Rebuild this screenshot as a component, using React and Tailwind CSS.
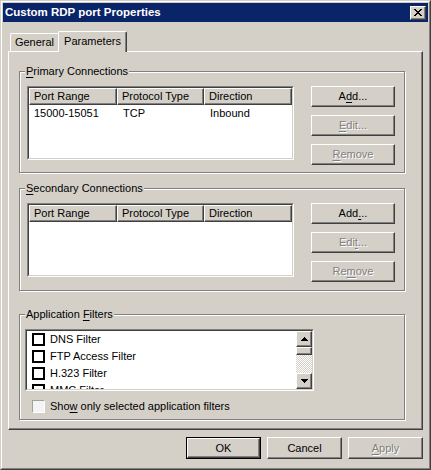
import React from 'react';

const raised =
  'border border-t-white border-l-white border-r-[#404040] border-b-[#404040] bg-[#d4d0c8] shadow-[inset_-1px_-1px_0_#808080]';
const disabledText = 'text-[#808080] [text-shadow:1px_1px_0_#fff]';

function Btn({ children, disabled, wide, isDefault }) {
  const size = wide ? 'h-[20px] w-[73px]' : 'h-[21px] w-[84px]';
  const inner = (
    <button
      type="button"
      className={`flex ${size} items-center justify-center ${raised} ${disabled ? disabledText : 'text-black'}`}
    >
      {children}
    </button>
  );
  if (wide) {
    return (
      <div className={`h-[22px] w-[75px] border ${isDefault ? 'border-black' : 'border-transparent'}`}>
        {isDefault ? inner : (
          <button
            type="button"
            className={`-m-px flex h-[22px] w-[75px] items-center justify-center ${raised} ${disabled ? disabledText : 'text-black'}`}
          >
            {children}
          </button>
        )}
      </div>
    );
  }
  return inner;
}

const Key = ({ children }) => <span className="underline underline-offset-[2px]">{children}</span>;

function GroupBox({ label, className, children }) {
  return (
    <div
      className={`relative w-[386px] border border-[#808080] shadow-[inset_1px_1px_0_#fff,1px_1px_0_#fff] ${className}`}
    >
      <span className="absolute left-[5px] top-[-8px] bg-[#d4d0c8] px-[1px] leading-[14px]">{label}</span>
      {children}
    </div>
  );
}

function HeaderCell({ className, children }) {
  return (
    <div
      className={`flex h-[17px] items-center border border-t-white border-l-white border-r-[#404040] border-b-[#404040] bg-[#d4d0c8] pl-[4px] shadow-[inset_-1px_-1px_0_#808080] ${className}`}
    >
      {children}
    </div>
  );
}

function ListView({ rows }) {
  return (
    <div className="h-[74px] w-[267px] border border-t-[#808080] border-l-[#808080] border-r-white border-b-white">
      <div className="h-full w-full border border-t-[#404040] border-l-[#404040] border-r-[#d4d0c8] border-b-[#d4d0c8] bg-white">
        <div className="flex">
          <HeaderCell className="w-[88px]">Port Range</HeaderCell>
          <HeaderCell className="w-[87px]">Protocol Type</HeaderCell>
          <HeaderCell className="flex-1">Direction</HeaderCell>
        </div>
        {rows.map((r) => (
          <div key={r[0]} className="flex h-[17px] items-center">
            <div className="w-[88px] pl-[5px]">{r[0]}</div>
            <div className="w-[87px] pl-[6px]">{r[1]}</div>
            <div className="flex-1 pl-[6px]">{r[2]}</div>
          </div>
        ))}
      </div>
    </div>
  );
}

function ConnButtons({ secondary }) {
  return (
    <div className="ml-[17px] flex flex-col gap-[8px]">
      <Btn>
        {secondary ? (
          <>
            Add<Key>.</Key>..
          </>
        ) : (
          <>
            A<Key>d</Key>d...
          </>
        )}
      </Btn>
      <Btn disabled>
        {secondary ? (
          <>
            Edi<Key>t</Key>...
          </>
        ) : (
          <>
            <Key>E</Key>dit...
          </>
        )}
      </Btn>
      <Btn disabled>
        {secondary ? (
          <>
            Re<Key>m</Key>ove
          </>
        ) : (
          <>
            <Key>R</Key>emove
          </>
        )}
      </Btn>
    </div>
  );
}

const Arrow = ({ down }) => (
  <svg width="7" height="4" viewBox="0 0 7 4" shapeRendering="crispEdges">
    {down ? (
      <path d="M0 0h7v1H0zM1 1h5v1H1zM2 2h3v1H2zM3 3h1v1H3z" fill="#000" />
    ) : (
      <path d="M3 0h1v1H3zM2 1h3v1H2zM1 2h5v1H1zM0 3h7v1H0z" fill="#000" />
    )}
  </svg>
);

function ScrollBar() {
  return (
    <div className="flex w-[16px] flex-col">
      <div className={`flex h-[16px] w-[16px] items-center justify-center ${raised}`}>
        <Arrow />
      </div>
      <div className={`h-[8px] w-[16px] ${raised}`} />
      <div className="flex-1 bg-[image:repeating-conic-gradient(#ffffff_0_25%,#d4d0c8_0_50%)] bg-[length:2px_2px]" />
      <div className={`flex h-[16px] w-[16px] items-center justify-center ${raised}`}>
        <Arrow down />
      </div>
    </div>
  );
}

const filters = ['DNS Filter', 'FTP Access Filter', 'H.323 Filter', 'MMC Filter'];

export default function App() {
  return (
    <div className="h-[470px] w-[431px] bg-[#d4d0c8] font-['Liberation_Sans',Arial,sans-serif] text-[11px] leading-[13px] text-black">
      <div className="h-full w-full border border-t-[#d4d0c8] border-l-[#d4d0c8] border-r-[#404040] border-b-[#404040]">
        <div className="h-full w-full border border-t-white border-l-white border-r-[#808080] border-b-[#808080] p-px">
          {/* title bar */}
          <div className="flex h-[19px] items-center justify-between bg-[#0a246a] pl-[2px] pr-[2px]">
            <span className="text-[11.5px] font-bold text-white">Custom RDP port Properties</span>
            <div className={`flex h-[14px] w-[16px] items-center justify-center ${raised}`}>
              <svg width="8" height="7" viewBox="0 0 8 7" shapeRendering="crispEdges">
                <path
                  d="M0 0h2v1H0zM6 0h2v1H6zM1 1h2v1H1zM5 1h2v1H5zM2 2h4v1H2zM3 3h2v1H3zM2 4h4v1H2zM1 5h2v1H1zM5 5h2v1H5zM0 6h2v1H0zM6 6h2v1H6z"
                  fill="#000"
                />
              </svg>
            </div>
          </div>

          <div className="px-[5px]">
            {/* tabs */}
            <div className="mt-[9px] flex items-end pl-[2px]">
              <div className="flex h-[18px] w-[48px] items-center justify-center rounded-tl-[2px] border-t border-l border-t-white border-l-white">
                General
              </div>
              <div className="relative z-10 -mb-px flex h-[21px] w-[69px] items-start justify-center rounded-t-[2px] border-t border-l border-r border-t-white border-l-white border-r-[#404040] bg-[#d4d0c8] pt-[3px] shadow-[inset_-1px_0_0_#808080]">
                Parameters
              </div>
            </div>

            {/* tab page */}
            <div className="h-[379px] border border-t-white border-l-white border-r-[#404040] border-b-[#404040] pl-[10px] pt-[19px] shadow-[inset_-1px_-1px_0_#808080]">
              <GroupBox
                className="h-[102px]"
                label={
                  <>
                    <Key>P</Key>rimary Connections
                  </>
                }
              >
                <div className="flex pl-[7px] pt-[14px]">
                  <ListView rows={[['15000-15051', 'TCP', 'Inbound']]} />
                  <ConnButtons />
                </div>
              </GroupBox>

              <GroupBox
                className="mt-[15px] h-[103px]"
                label={
                  <>
                    <Key>S</Key>econdary Connections
                  </>
                }
              >
                <div className="flex pl-[7px] pt-[14px]">
                  <ListView rows={[]} />
                  <ConnButtons secondary />
                </div>
              </GroupBox>

              <GroupBox
                className="mt-[23px] h-[106px]"
                label={
                  <>
                    Application <Key>F</Key>ilters
                  </>
                }
              >
                <div className="pl-[5px] pt-[14px]">
                  <div className="h-[62px] w-[289px] border border-t-[#808080] border-l-[#808080] border-r-white border-b-white">
                    <div className="flex h-full w-full border border-t-[#404040] border-l-[#404040] border-r-[#d4d0c8] border-b-[#d4d0c8] bg-white">
                      <div className="flex-1 overflow-hidden">
                        {filters.map((f) => (
                          <div key={f} className="flex h-[17px] items-center">
                            <span className="ml-[5px] h-[13px] w-[13px] border-2 border-black bg-white" />
                            <span className="ml-[5px]">{f}</span>
                          </div>
                        ))}
                      </div>
                      <ScrollBar />
                    </div>
                  </div>
                  <div className="ml-[7px] mt-[9px] flex items-center">
                    <span className="h-[13px] w-[13px] border border-t-[#a0a0a0] border-l-[#a0a0a0] border-r-white border-b-white bg-[#f4f4f4]" />
                    <span className="ml-[5px]">
                      Sho<Key>w</Key> only selected application filters
                    </span>
                  </div>
                </div>
              </GroupBox>
            </div>

            {/* dialog buttons */}
            <div className="mt-[7px] flex justify-end gap-[6px]">
              <Btn wide isDefault>
                OK
              </Btn>
              <Btn wide>Cancel</Btn>
              <Btn wide disabled>
                <Key>A</Key>pply
              </Btn>
            </div>
          </div>
        </div>
      </div>
    </div>
  );
}
